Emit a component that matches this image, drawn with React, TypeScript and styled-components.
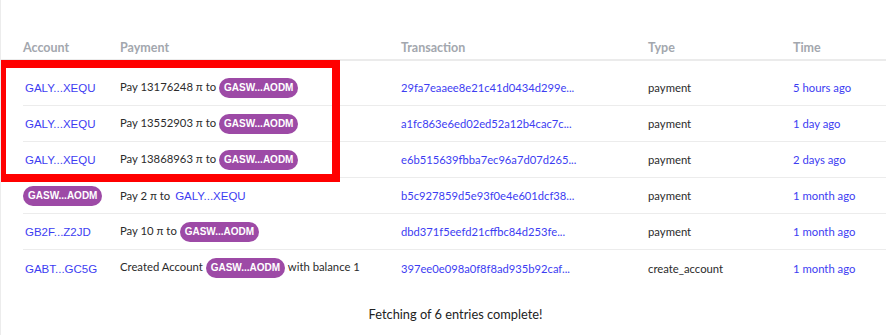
import React from 'react'
import styled, { createGlobalStyle } from 'styled-components';

type Entry = {
    account: string;
    accountBadge?: boolean;
    payment: React.ReactNode;
    tx: string;
    type: string;
    time: string;
}

const BADGE = 'GASW...AODM';

const getEntries = (): Entry[] => [
    { account: 'GALY...XEQU', payment: <>Pay 13176248 π to <Badge>{BADGE}</Badge></>, tx: '29fa7eaaee8e21c41d0434d299e...', type: 'payment', time: '5 hours ago' },
    { account: 'GALY...XEQU', payment: <>Pay 13552903 π to <Badge>{BADGE}</Badge></>, tx: 'a1fc863e6ed02ed52a12b4cac7c...', type: 'payment', time: '1 day ago' },
    { account: 'GALY...XEQU', payment: <>Pay 13868963 π to <Badge>{BADGE}</Badge></>, tx: 'e6b515639fbba7ec96a7d07d265...', type: 'payment', time: '2 days ago' },
    { account: BADGE, accountBadge: true, payment: <>Pay 2 π to <Address>GALY...XEQU</Address></>, tx: 'b5c927859d5e93f0e4e601dcf38...', type: 'payment', time: '1 month ago' },
    { account: 'GB2F...Z2JD', payment: <>Pay 10 π to <Badge>{BADGE}</Badge></>, tx: 'dbd371f5eefd21cffbc84d253fe...', type: 'payment', time: '1 month ago' },
    { account: 'GABT...GC5G', payment: <>Created Account <Badge>{BADGE}</Badge> with balance 1</>, tx: '397ee0e098a0f8f8ad935b92caf...', type: 'create_account', time: '1 month ago' },
]

const App: React.FC = () => {
    const entries = getEntries();
    return (
        <>
            <GlobalStyle />
            <Card>
                <HeaderRow>
                    <HeadCell>Account</HeadCell>
                    <HeadCell>Payment</HeadCell>
                    <HeadCell>Transaction</HeadCell>
                    <HeadCell>Type</HeadCell>
                    <HeadCell>Time</HeadCell>
                </HeaderRow>
                <Body>
                    {entries.map((e, i) => (
                        <Row key={i}>
                            <Cell>{e.accountBadge ? <Badge>{e.account}</Badge> : <Address>{e.account}</Address>}</Cell>
                            <Cell>{e.payment}</Cell>
                            <Cell><Hash>{e.tx}</Hash></Cell>
                            <Cell>{e.type}</Cell>
                            <Cell><Link>{e.time}</Link></Cell>
                        </Row>
                    ))}
                    <Highlight />
                </Body>
                <Footer>Fetching of 6 entries complete!</Footer>
            </Card>
        </>
    )
}

export default App;


const GlobalStyle = createGlobalStyle`
  body {
    margin: 0;
    background: #ffffff;
    font-family: Lato, "Noto Sans", sans-serif;
    color: #333;
  }
`;

const Card = styled.div`
  width: 886px;
  height: 335px;
  box-sizing: border-box;
  padding-top: 36px;
  border-left: 1px solid #ececec;
  overflow: hidden;
`;

const columns = '97px 281px 247px 145px 1fr';

const HeaderRow = styled.div`
  display: grid;
  grid-template-columns: ${columns};
  align-items: center;
  height: 23px;
  padding-left: 22px;
  border-bottom: 2px solid #ebebeb;
`;

const HeadCell = styled.div`
  font-size: 12.5px;
  font-weight: 700;
  color: #a3a7ae;
`;

const Body = styled.div`
  position: relative;
  padding-top: 9px;
`;

const Row = styled.div`
  display: grid;
  grid-template-columns: ${columns};
  align-items: center;
  height: 36px;
  box-sizing: border-box;
  margin-left: 22px;
  border-bottom: 1px solid #ececec;

  &:nth-last-of-type(2) {
    border-bottom: none;
  }
`;

const Cell = styled.div`
  font-size: 11.3px;
  color: #2b2b2b;
  white-space: nowrap;
`;

const Link = styled.span`
  color: #3d3df2;
`;

const Hash = styled(Link)`
  font-size: 11.2px;
`;

const Address = styled.span`
  font-family: "Liberation Sans", Arial, sans-serif;
  font-size: 11.5px;
  color: #3d3df2;
  margin-left: 2px;
`;

const Badge = styled.span`
  display: inline-block;
  font-family: "Liberation Sans", Arial, sans-serif;
  font-size: 10px;
  font-weight: 700;
  color: #fff;
  background: #9d4aa6;
  border-radius: 10px;
  padding: 4px 5px;
  line-height: 12px;
  vertical-align: middle;
`;

const Highlight = styled.div`
  position: absolute;
  left: -3px;
  top: -1px;
  width: 342px;
  height: 122px;
  box-sizing: border-box;
  border: 8px solid #ff0000;
  pointer-events: none;
`;

const Footer = styled.div`
  margin-top: 20px;
  padding-left: 24px;
  text-align: center;
  font-size: 12.8px;
  color: #222;
`;
